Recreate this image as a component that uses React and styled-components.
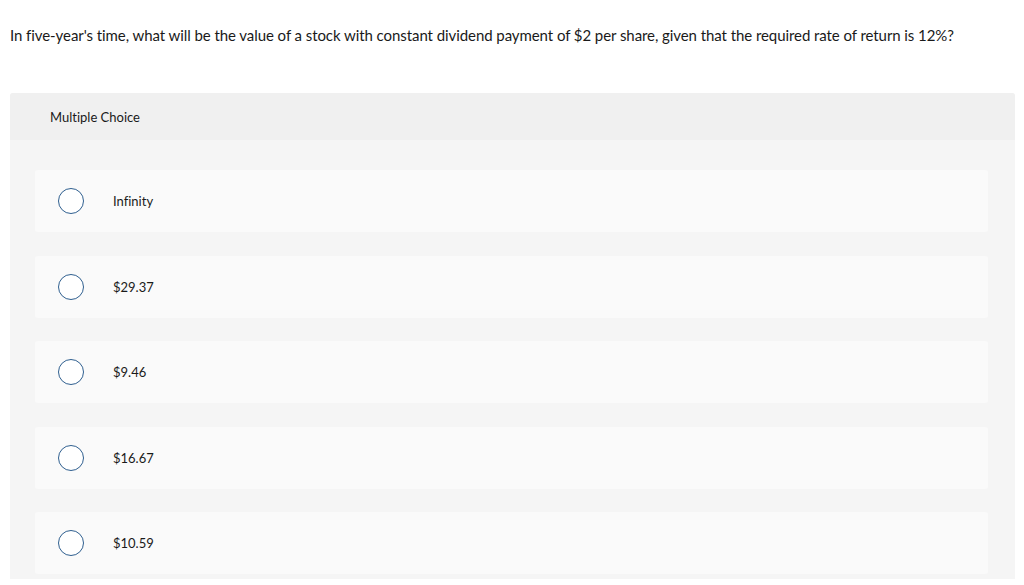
import React from 'react';
import styled, {createGlobalStyle} from 'styled-components';

const GlobalStyle = createGlobalStyle`
    html, body {
        margin: 0;
        padding: 0;
        background: #ffffff;
    }
    body {
        font-family: Lato, "Open Sans", Arial, sans-serif;
        font-variant-ligatures: none;
        color: #1a1a1a;
    }
`;

const choices = ['Infinity', '$29.37', '$9.46', '$16.67', '$10.59'];

function App () {
    return (
        <Page>
            <GlobalStyle/>
            <Question>
                In five-year's time, what will be the value of a stock with constant dividend payment of $2 per share, given that the required rate of return is 12%?
            </Question>
            <Panel>
                <Header>Multiple Choice</Header>
                <Body>
                    {choices.map(c => (
                        <Choice key={c}>
                            <Radio/>
                            <Label>{c}</Label>
                        </Choice>
                    ))}
                </Body>
            </Panel>
        </Page>
    )
}

const Page = styled.div`
    padding: 26px 9px 0 10px;
`;
const Question = styled.p`
    margin: 0 0 49px;
    font-size: 15px;
    line-height: 18px;
    letter-spacing: -0.07px;
    color: #1a1a1a;
    white-space: nowrap;
`;
const Panel = styled.div`
    background: #f5f5f5;
    border-radius: 3px 3px 0 0;
    width: 1005px;
`;
const Header = styled.div`
    background: #f0f0f0;
    border-radius: 3px 3px 0 0;
    height: 47px;
    display: flex;
    align-items: center;
    padding-left: 40px;
    font-size: 13px;
    color: #1a1a1a;
`;
const Body = styled.div`
    display: flex;
    flex-direction: column;
    gap: 23.5px;
    padding: 30px 27px 5px 25px;
`;
const Choice = styled.div`
    background: #fafafa;
    border-radius: 3px;
    height: 62px;
    display: flex;
    align-items: center;
    padding-left: 23px;
`;
const Radio = styled.span`
    width: 24px;
    height: 24px;
    border: 1px solid #2f5f8f;
    border-radius: 50%;
    background: #ffffff;
    flex-shrink: 0;
`;
const Label = styled.span`
    margin-left: 29px;
    font-size: 13px;
    color: #1a1a1a;
`;

export default App;
